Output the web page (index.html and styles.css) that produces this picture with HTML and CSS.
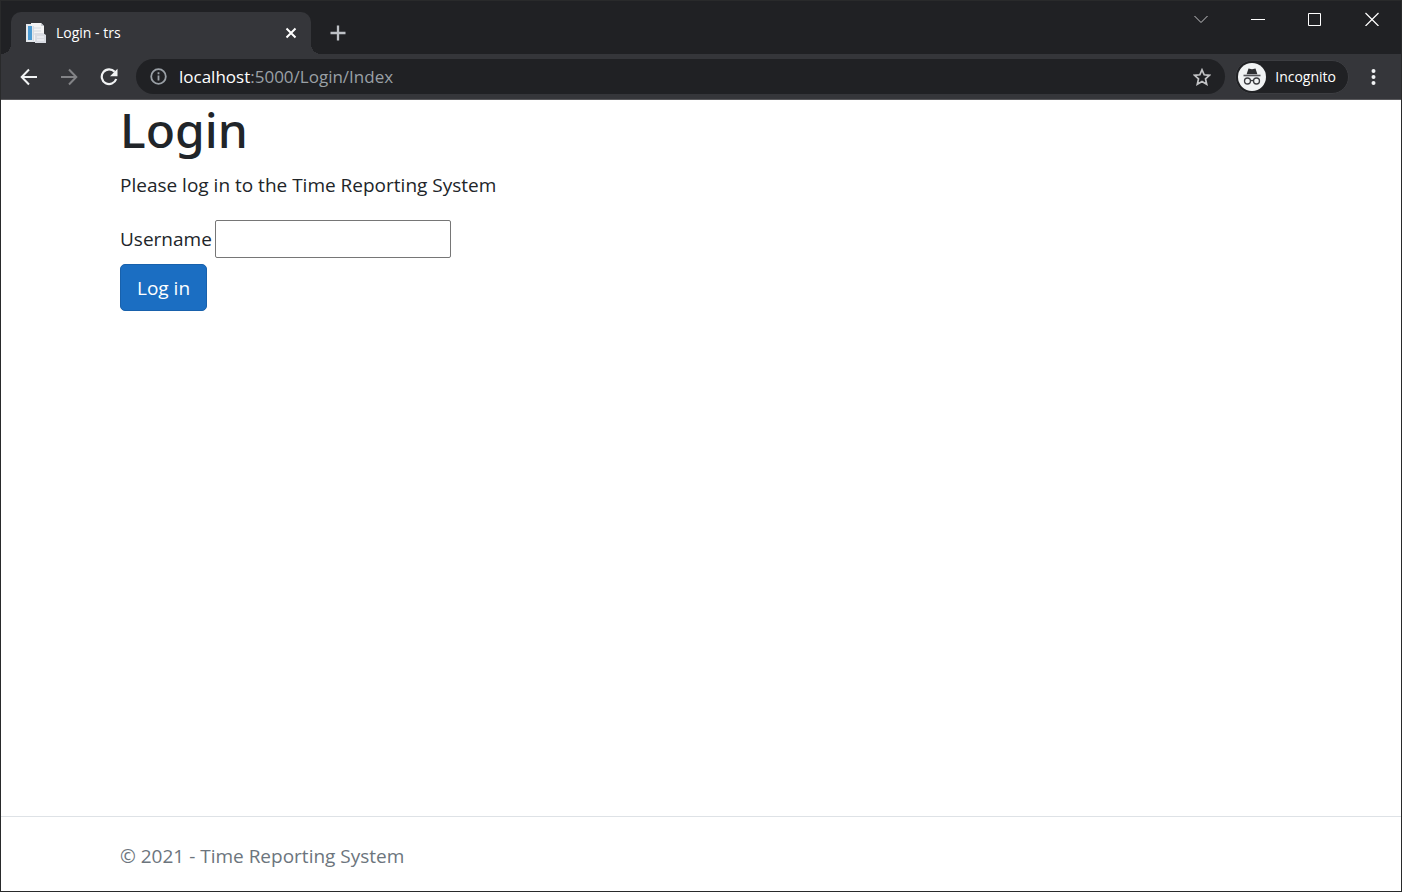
FILE: index.html
```html
<!DOCTYPE html>
<html lang="en">
<head>
<meta charset="utf-8">
<meta name="viewport" content="width=device-width, initial-scale=1">
<title>Login - trs</title>
<link rel="stylesheet" href="styles.css">
</head>
<body>
<div class="window">
  <div class="tab-strip">
    <div class="tab">
      <svg class="favicon" width="22" height="22" viewBox="0 0 22 22" aria-hidden="true">
        <path d="M1 2h13v18H1z" fill="#e4e8ec"/>
        <path d="M3 4h4v14H3z" fill="#4c9bd3"/>
        <path d="M6 1h10l3 3v15H8V4H6z" fill="#f3f3f4"/>
        <path d="M16 1v3h3" fill="#c8cbd0"/>
        <path d="M9 6h7M9 9h7M9 12h3M8.500 4v15" stroke="#d5dae1" fill="none"/>
        <path d="M10 11h8l3 2v8H10z" fill="#d9dce3"/>
        <path d="M12 15h7M12 18h7" stroke="#f8f8fa" fill="none"/>
      </svg>
      <span class="tab-title">Login - trs</span>
      <button class="icon-button tab-close" aria-label="Close tab"><svg width="12" height="12" viewBox="0 0 12 12"><path d="M1.500 1.500l9 9M10.500 1.500l-9 9" stroke="#fff" stroke-width="2"/></svg></button>
    </div>
    <button class="icon-button new-tab" aria-label="New tab"><svg width="16" height="16" viewBox="0 0 16 16"><path d="M8 .5v15M.5 8h15" stroke="#bdc1c6" stroke-width="2.300"/></svg></button>
    <div class="window-controls">
      <button class="icon-button" aria-label="Search tabs"><svg width="14" height="14" viewBox="0 0 14 14"><path d="M.5 4l6.500 6.500L13.500 4" fill="none" stroke="#c4c5c7"/></svg></button>
      <button class="icon-button" aria-label="Minimize"><svg width="14" height="14" viewBox="0 0 14 14"><path d="M0 7.500h14" stroke="#fff"/></svg></button>
      <button class="icon-button" aria-label="Maximize"><svg width="14" height="14" viewBox="0 0 14 14"><path d="M.5 1.500h12v12H.5z" fill="none" stroke="#fff"/></svg></button>
      <button class="icon-button" aria-label="Close"><svg width="14" height="14" viewBox="0 0 14 14"><path d="M.5 1l13 13M13.500 1L.5 14" stroke="#fff" stroke-width="1.200"/></svg></button>
    </div>
  </div>
  <div class="toolbar">
    <button class="icon-button nav" aria-label="Back"><svg width="18" height="18" viewBox="0 0 18 18"><path d="M17 9H2M9 1.500L1.700 9 9 16.500" fill="none" stroke="#f1f3f4" stroke-width="2"/></svg></button>
    <button class="icon-button nav" aria-label="Forward"><svg width="18" height="18" viewBox="0 0 18 18"><path d="M1 9h15M9 1.500L16.300 9 9 16.500" fill="none" stroke="#828386" stroke-width="2"/></svg></button>
    <button class="icon-button nav" aria-label="Reload"><svg width="18" height="18" viewBox="0 0 18 18"><path d="M14.700 3.800A7.400 7.400 0 1 0 16.200 11" fill="none" stroke="#f1f3f4" stroke-width="2.200"/><path d="M17.500 .8v7.500H10z" fill="#f1f3f4"/></svg></button>
    <div class="address-bar">
      <svg width="17" height="17" viewBox="0 0 17 17" aria-hidden="true"><circle cx="8.500" cy="8.500" r="7.300" fill="none" stroke="#9aa0a6" stroke-width="1.800"/><path d="M8.500 7.500v5M8.500 4.300v2" stroke="#9aa0a6" stroke-width="1.800"/></svg>
      <span class="url"><span class="host">localhost</span>:5000/Login/Index</span>
      <button class="icon-button" aria-label="Bookmark this page"><svg width="18" height="18" viewBox="0 0 18 18"><path d="M9 1.800l2.200 5 5.300.5-4 3.600 1.200 5.300L9 13.400l-4.700 2.800 1.200-5.300-4-3.600 5.300-.5z" fill="none" stroke="#c2c3c5" stroke-width="1.700"/></svg></button>
    </div>
    <div class="incognito">
      <svg width="28" height="28" viewBox="0 0 28 28" aria-hidden="true"><circle cx="14" cy="14" r="14" fill="#f1f3f4"/><path d="M10.500 5.500l3.500.8 3.500-.8 1.900 5.800H8.600z" fill="#2d2e31"/><path d="M5.500 12.500h17" stroke="#55565a" stroke-width="1.600"/><circle cx="9.500" cy="18" r="3" fill="none" stroke="#3c3d41" stroke-width="1.300"/><circle cx="18.500" cy="18" r="3" fill="none" stroke="#3c3d41" stroke-width="1.300"/><path d="M12.500 18q1.500-1.300 3 0" fill="none" stroke="#3c3d41" stroke-width="1.300"/></svg>
      <span>Incognito</span>
    </div>
    <button class="icon-button menu" aria-label="Menu"><svg width="5" height="18" viewBox="0 0 5 18"><g fill="#f1f3f4"><circle cx="2.500" cy="3" r="2"/><circle cx="2.500" cy="9" r="2"/><circle cx="2.500" cy="15" r="2"/></g></svg></button>
  </div>
  <div class="page">
    <main class="container">
      <h1 class="heading">Login</h1>
      <p class="intro">Please log in to the Time Reporting System</p>
      <form class="login-form">
        <div class="field">
          <label for="username">Username</label>
          <input class="text-input" id="username" name="username" type="text">
        </div>
        <button class="submit" type="submit">Log in</button>
      </form>
    </main>
    <footer class="footer"><div class="container">© 2021 - Time Reporting System</div></footer>
  </div>
</div>
</body>
</html>
```
FILE: styles.css
```css
* { box-sizing: border-box; }

body {
  margin: 0;
  color: #212529;
  font-family: "Open Sans", "Noto Sans", sans-serif;
  font-size: 19px;
  line-height: 30px;
}

svg { display: block; flex: none; }

.window {
  display: flex;
  flex-direction: column;
  min-height: 100vh;
  border: 1px solid #292a2b;
  border-top: 0;
}

.icon-button {
  display: flex;
  align-items: center;
  justify-content: center;
  padding: 0;
  border: 0;
  background: none;
}

.tab-strip {
  display: flex;
  align-items: flex-end;
  height: 54px;
  padding: 0 1px 0 10px;
  background: #202124;
  border-top: 1px solid #292a2b;
}

.tab {
  position: relative;
  display: flex;
  align-items: center;
  width: 300px;
  height: 42px;
  padding: 0 14px;
  gap: 9px;
  border-radius: 10px 10px 0 0;
  background: #35363a;
  color: #fff;
  font-size: 14px;
}

.tab::before,
.tab::after {
  content: "";
  position: absolute;
  bottom: 0;
  width: 10px;
  height: 10px;
}

.tab::before {
  right: 100%;
  background: radial-gradient(circle at 0 0, transparent 10px, #35363a 10px);
}

.tab::after {
  left: 100%;
  background: radial-gradient(circle at 100% 0, transparent 10px, #35363a 10px);
}

.tab-title { flex: 1; }

.new-tab {
  width: 34px;
  height: 42px;
  margin-left: 10px;
}

.window-controls {
  display: flex;
  align-self: flex-start;
  margin-left: auto;
}

.window-controls .icon-button {
  width: 57px;
  height: 36px;
}

.toolbar {
  display: flex;
  align-items: center;
  height: 46px;
  padding: 0 16px 0 8px;
  background: #35363a;
  border-bottom: 1px solid #59595c;
}

.nav {
  width: 40px;
  height: 40px;
}

.address-bar {
  display: flex;
  flex: 1;
  align-items: center;
  gap: 12px;
  height: 35px;
  margin-left: 7px;
  padding: 0 14px;
  border-radius: 18px;
  background: #202124;
}

.url {
  flex: 1;
  color: #9aa0a6;
  font-size: 17px;
}

.host { color: #fff; }

.incognito {
  display: flex;
  align-items: center;
  gap: 9px;
  height: 34px;
  margin-left: 10px;
  padding: 0 12px 0 2px;
  border: 1px solid #3c3d41;
  border-radius: 17px;
  background: #202124;
  color: #fff;
  font-size: 14px;
}

.menu {
  width: 24px;
  height: 34px;
  margin-left: 12px;
}

.page {
  display: flex;
  flex: 1;
  flex-direction: column;
  background: #fff;
}

.container {
  width: 100%;
  max-width: 1200px;
  margin: 0 auto;
  padding: 0 19px;
}

.heading {
  margin: 0 0 10px;
  font-family: "Noto Sans", "Open Sans", sans-serif;
  font-size: 48px;
  font-weight: 500;
  line-height: 60px;
}

.intro { margin: 0 0 20px; }

.field {
  display: flex;
  align-items: center;
  gap: 3px;
  margin-bottom: 6px;
}

.text-input {
  width: 236px;
  height: 38px;
  padding: 2px;
  border: 1px solid #767676;
  border-radius: 2px;
  font: inherit;
}

.submit {
  height: 47px;
  padding: 0 16px;
  border: 1px solid #1861ac;
  border-radius: 5px;
  background: #1b6ec2;
  color: #fff;
  font: inherit;
}

.footer {
  margin-top: auto;
  padding: 24px 0 20px;
  border-top: 1px solid #dee2e6;
  color: #6c757d;
}
```
